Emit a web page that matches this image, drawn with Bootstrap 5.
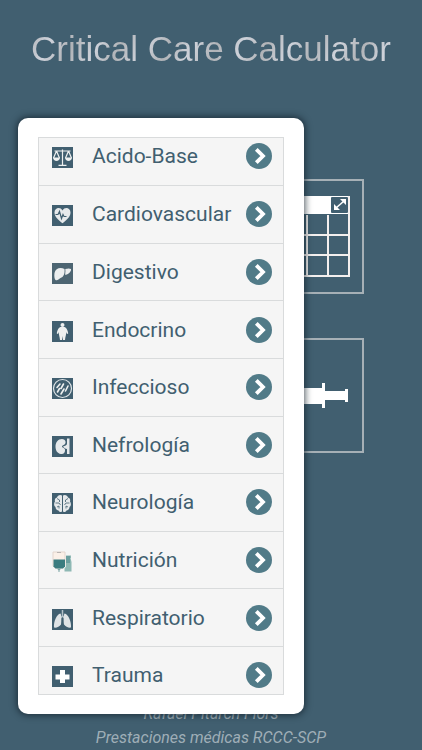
<!DOCTYPE html>
<html lang="es">
<head>
<meta charset="utf-8">
<meta name="viewport" content="width=device-width, initial-scale=1">
<title>Critical Care Calculator</title>
<link rel="stylesheet" href="https://cdn.jsdelivr.net/npm/bootstrap@5.3.0/dist/css/bootstrap.min.css">
<style>
  body { background: #415f70; color: #415f70; font-family: Roboto, sans-serif; overflow: hidden; }
  .app-title { font: 35px/42px "Liberation Sans", sans-serif; padding-top: 28px; }
  .app-title span { background: repeating-linear-gradient(115deg, #b0b3b7 0, #ced2da 22px, #b0b3b7 44px); -webkit-background-clip: text; background-clip: text; color: transparent; }
  .tiles { padding: 109px 58px 0 0; gap: 44px; }
  .tile { width: 115px; height: 115px; border: 2px solid #a6b0b6; background: none; }
  .credits { font-size: 16px; line-height: 24px; color: #9faeb7; }
  .menu-panel { left: 18px; top: 118px; bottom: 36px; width: 286px; padding: 19px 20px; background: #fff; border-radius: 10px; box-shadow: 0 0 7px 1px rgba(15, 28, 38, .75); }
  .menu-list { background: #f5f5f5; border: 1px solid #d9dbdc; }
  .menu-row { flex: 1 1 0; padding: 0 11px 0 13px; border-bottom: 1px solid #d9dbdc; color: #415f70; font-size: 21px; line-height: 28px; }
  .menu-row:first-child { flex: 0 0 48px; align-items: flex-end !important; padding-bottom: 15px; }
  .menu-row:last-child { flex: 0 0 47px; align-items: flex-start !important; padding-top: 14px; border-bottom: 0; }
  .menu-icon { width: 21px; height: 21px; margin: 5px 19px 2px 0; }
  .menu-go { width: 26px; height: 26px; margin: 1px 0; }
</style>
<script src="https://cdn.jsdelivr.net/npm/bootstrap@5.3.0/dist/js/bootstrap.bundle.min.js"></script>
</head>
<body>
<svg class="d-none" aria-hidden="true">
  <symbol id="go" viewBox="0 0 26 26"><circle cx="13" cy="13" r="13" fill="#517b88"/><path d="M10.300 6.300 17 13l-6.700 6.700" fill="none" stroke="#fff" stroke-width="3.800"/></symbol>
</svg>
<div class="min-vh-100 d-flex flex-column position-relative">
  <header><h1 class="app-title text-center text-nowrap m-0"><span>Critical Care Calculator</span></h1></header>
  <main class="tiles d-flex flex-column align-items-end flex-grow-1">
    <button class="tile p-0" type="button" aria-label="Tablas">
      <svg class="d-block" width="111" height="111" viewBox="0 0 111 111" aria-hidden="true">
        <path d="M16 15h83v18H16z" fill="#fff"/>
        <path d="M17 34v61h81V15M17 54h81M17 74h81M17 95h82M34 34v61M56 34v61M77 34v61" fill="none" stroke="#f3efee" stroke-width="2"/>
        <rect x="80" y="16" width="17" height="16" rx="1" fill="#415f70"/>
        <path d="M85 27l8-7" fill="none" stroke="#fff" stroke-width="1.600"/>
        <path d="M95 18v6l-6-6zM83 29v-6l6 6z" fill="#fff"/>
      </svg>
    </button>
    <button class="tile p-0" type="button" aria-label="Fármacos">
      <svg class="d-block" width="111" height="111" viewBox="0 0 111 111" aria-hidden="true">
        <path d="M16 53h10v-5h45v-5h3v8h20v-2h3v13h-3v-2H74v8h-3v-4H26v-5H16z" fill="#fff"/>
      </svg>
    </button>
  </main>
  <footer class="credits text-center fst-italic">
    <div>Rafael Pitarch Flors</div>
    <div>Prestaciones médicas RCCC-SCP</div>
  </footer>

  <nav class="menu-panel position-absolute d-flex" aria-label="Categorías">
    <div class="menu-list d-flex flex-column flex-grow-1 overflow-hidden">
      <a class="menu-row d-flex align-items-center text-decoration-none" href="#acido-base">
        <svg class="menu-icon" viewBox="0 0 21 21" aria-hidden="true"><path d="M0 0h21v21H0z" fill="#415f70"/><path d="M2.500 4h16M10.500 2.500v15.500M6.500 18.300h8M4.500 4l-3 7M4.500 4l3 7M16.500 4l-3 7M16.500 4l3 7" fill="none" stroke="#eef0f0" stroke-width="1.200"/><path d="M1 10.500h7c0 4.500-7 4.500-7 0zM13 10.500h7c0 4.500-7 4.500-7 0z" fill="#eef0f0"/></svg>
        <span class="flex-grow-1">Acido-Base</span><svg class="menu-go" aria-hidden="true"><use href="#go"/></svg>
      </a>
      <a class="menu-row d-flex align-items-center text-decoration-none" href="#cardiovascular">
        <svg class="menu-icon" viewBox="0 0 21 21" aria-hidden="true"><path d="M0 0h21v21H0z" fill="#415f70"/><path d="M10.500 18.300C7 15.500 2.500 12 2.500 7.500c0-5 6-6 8-2 2-4 8-3 8 2 0 4.500-4.500 8-8 10.800z" fill="#e6e9eb"/><path d="M3.500 9.500h2.500l1.500-3 2 7 1.500-4 1 2h2.500" fill="none" stroke="#415f70" stroke-width="1.200"/></svg>
        <span class="flex-grow-1">Cardiovascular</span><svg class="menu-go" aria-hidden="true"><use href="#go"/></svg>
      </a>
      <a class="menu-row d-flex align-items-center text-decoration-none" href="#digestivo">
        <svg class="menu-icon" viewBox="0 0 21 21" aria-hidden="true"><path d="M0 0h21v21H0z" fill="#4d6572"/><path d="M12.500 6c-4-2-9-1-10 4-.5 3 0 6 1 7 2 1 3-1 5-2 3-1 4.500-4 4-9zM13.300 6c2-.5 4-1 5.700 0 .5 2-2 5-5.500 6-.8-.5.300-3-.2-6z" fill="#eceeef"/></svg>
        <span class="flex-grow-1">Digestivo</span><svg class="menu-go" aria-hidden="true"><use href="#go"/></svg>
      </a>
      <a class="menu-row d-flex align-items-center text-decoration-none" href="#endocrino">
        <svg class="menu-icon" viewBox="0 0 21 21" aria-hidden="true"><path d="M0 0h21v21H0z" fill="#415f70"/><circle cx="10.500" cy="4" r="2" fill="#eef0f0"/><path d="M8.500 6h4c2 .5 3.500 4 3.700 6.500l-1.200.5-1-2c.5 3-.8 4.500-1 8H11l-.5-4-.5 4H8c-.2-3.500-1.500-5-1-8l-1 2-1.200-.5C5 10 6.500 6.500 8.500 6z" fill="#eef0f0"/></svg>
        <span class="flex-grow-1">Endocrino</span><svg class="menu-go" aria-hidden="true"><use href="#go"/></svg>
      </a>
      <a class="menu-row d-flex align-items-center text-decoration-none" href="#infeccioso">
        <svg class="menu-icon" viewBox="0 0 21 21" aria-hidden="true"><path d="M0 0h21v21H0z" fill="#415f70"/><circle cx="10.500" cy="10.500" r="9" fill="none" stroke="#dfe5e8" stroke-width="1.200"/><path d="M5 9.500l3-3.500M5.500 14l2-3.500M9 10.500l2.500-4.500M9 16l3-5M13.500 13l2.500-5" fill="none" stroke="#eef0f0" stroke-width="1.600" stroke-linecap="round"/></svg>
        <span class="flex-grow-1">Infeccioso</span><svg class="menu-go" aria-hidden="true"><use href="#go"/></svg>
      </a>
      <a class="menu-row d-flex align-items-center text-decoration-none" href="#nefrologia">
        <svg class="menu-icon" viewBox="0 0 21 21" aria-hidden="true"><path d="M0 0h21v21H0z" fill="#415f70"/><path d="M10 3c3 0 4.500 3 3 5-1 1.500-3 1-3 2.500s2.500 1 3 3c.5 3-1.500 5-4 4.500C5 17.500 3.500 14 3.500 10.500 3.500 6.500 6 3 10 3z" fill="#e6e9eb"/><path d="M15 2.500h2.500v15.500H15v-5c-1.500 0-3-1-4-2.500 2-.5 4-1 4-3z" fill="#e6e9eb"/></svg>
        <span class="flex-grow-1">Nefrología</span><svg class="menu-go" aria-hidden="true"><use href="#go"/></svg>
      </a>
      <a class="menu-row d-flex align-items-center text-decoration-none" href="#neurologia">
        <svg class="menu-icon" viewBox="0 0 21 21" aria-hidden="true"><path d="M0 0h21v21H0z" fill="#415f70"/><path d="M10 2.500C8 1 5.500 2.500 5 4.500 3 5 2.500 7 3 8.500 1.500 10.500 2 13 3.500 14c0 2 1.500 3.500 3 3.500 1 2 3.500 2 3.500.5zM11 2.500c2-1.500 4.500 0 5 2 2 .5 2.500 2.500 2 4 1.500 2 1 4.500-.5 5.500 0 2-1.500 3.500-3 3.500-1 2-3.500 2-3.500.5z" fill="#e6e9eb"/><path d="M5 5.500l2.500 1.500v2M3.500 10H7l1.500 2M5 14l2-1v2.500M16 5.500 13.500 7v2M17.500 10H14l-1.500 2M16 14l-2-1v2.500" fill="none" stroke="#415f70" stroke-width=".8"/></svg>
        <span class="flex-grow-1">Neurología</span><svg class="menu-go" aria-hidden="true"><use href="#go"/></svg>
      </a>
      <a class="menu-row d-flex align-items-center text-decoration-none" href="#nutricion">
        <svg class="menu-icon" viewBox="0 0 21 21" aria-hidden="true"><path d="M1 1h12v14l-2 2H3l-2-2z" fill="#fbf0e8" stroke="#e3d5cd" stroke-width="1"/><path d="M5 1.500h4" stroke="#b9b4b2" stroke-width="1"/><path d="M1.500 8.500h11.500v7l-2 2H3.500l-2-2z" fill="#3b7c80"/><path d="M5 17.500h4l-1.500 2v1.500h-1v-1.500z" fill="#7da5a5"/><path d="M14 4.500h5v2.500h-.5l1 4v9.500H12.500v-3l1.500-2z" fill="#8eb8b4"/><path d="M14 5h4v7h-4z" fill="#6c9f9f"/></svg>
        <span class="flex-grow-1">Nutrición</span><svg class="menu-go" aria-hidden="true"><use href="#go"/></svg>
      </a>
      <a class="menu-row d-flex align-items-center text-decoration-none" href="#respiratorio">
        <svg class="menu-icon" viewBox="0 0 21 21" aria-hidden="true"><path d="M0 0h21v21H0z" fill="#415f70"/><path d="M10.500 1v7M10.500 7l-3 3M10.500 7l3 3" fill="none" stroke="#b4c1c9" stroke-width="1.500"/><path d="M8.500 4.500c1 1 1 8 .5 11-1.500 2.500-5 3.500-7 3C1.500 13 4.500 5 8.500 4.500zM12.500 4.500c-1 1-1 8-.5 11 1.500 2.500 5 3.500 7 3C19.500 13 16.500 5 12.500 4.500z" fill="#dfe3e6"/></svg>
        <span class="flex-grow-1">Respiratorio</span><svg class="menu-go" aria-hidden="true"><use href="#go"/></svg>
      </a>
      <a class="menu-row d-flex align-items-center text-decoration-none" href="#trauma">
        <svg class="menu-icon" viewBox="0 0 21 21" aria-hidden="true"><path d="M0 0h21v21H0z" fill="#415f70"/><path d="M8 4h5v4.500h4.500v5H13V17H8v-3.500H3.500v-5H8z" fill="#fff"/></svg>
        <span class="flex-grow-1">Trauma</span><svg class="menu-go" aria-hidden="true"><use href="#go"/></svg>
      </a>
    </div>
  </nav>
</div>
</body>
</html>
